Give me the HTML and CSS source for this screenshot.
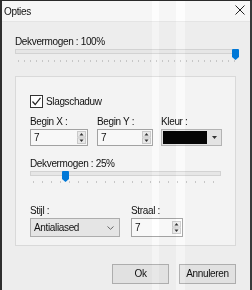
FILE: index.html
```html
<!DOCTYPE html>
<html lang="nl">
<head>
<meta charset="utf-8">
<title>Opties</title>
<link rel="stylesheet" href="styles.css">
</head>
<body>
<div class="window">
  <div class="titlebar">
    <span class="title">Opties</span>
    <svg class="close" width="10" height="10" viewBox="0 0 10 10"><path d="M0.5 0.5L9.5 9.5M9.5 0.5L0.5 9.5" stroke="#222" stroke-width="1" fill="none"/></svg>
  </div>
  <div class="content">
    <div class="label">Dekvermogen : 100%</div>
    <div class="slider">
      <div class="track"></div>
      <svg class="thumb thumb-full" width="7" height="11" viewBox="0 0 7 11"><path d="M0 1Q0 0 1 0H6Q7 0 7 1V8L3.5 11L0 8Z" fill="#0078d7"/></svg>
      <div class="ticks"></div>
    </div>

    <div class="panel">
      <div class="check">
        <span class="box"><svg width="11" height="11" viewBox="0 0 11 11"><path d="M1.5 5.5L4.2 8.5L9.5 1.8" fill="none" stroke="#222" stroke-width="1.2"/></svg></span>
        <span>Slagschaduw</span>
      </div>

      <div class="fields">
        <div class="field">
          <div class="flabel">Begin X :</div>
          <div class="spin"><span class="val">7</span>
            <svg class="arrows" width="9" height="13" viewBox="0 0 9 13"><rect x="0.5" y="0.5" width="8" height="5.5" fill="#e8e8e8" stroke="#c9c9c9"/><rect x="0.5" y="7" width="8" height="5.5" fill="#e8e8e8" stroke="#c9c9c9"/><path d="M2.5 4.5H6.5L4.5 2Z" fill="#333"/><path d="M2.5 8.5H6.5L4.5 11Z" fill="#333"/></svg>
          </div>
        </div>
        <div class="field">
          <div class="flabel">Begin Y :</div>
          <div class="spin"><span class="val">7</span>
            <svg class="arrows" width="9" height="13" viewBox="0 0 9 13"><rect x="0.5" y="0.5" width="8" height="5.5" fill="#e8e8e8" stroke="#c9c9c9"/><rect x="0.5" y="7" width="8" height="5.5" fill="#e8e8e8" stroke="#c9c9c9"/><path d="M2.5 4.5H6.5L4.5 2Z" fill="#333"/><path d="M2.5 8.5H6.5L4.5 11Z" fill="#333"/></svg>
          </div>
        </div>
        <div class="field">
          <div class="flabel">Kleur :</div>
          <div class="color"><span class="swatch"></span>
            <svg class="caret" width="5" height="3" viewBox="0 0 5 3"><path d="M0 0H5L2.5 3Z" fill="#333"/></svg>
          </div>
        </div>
      </div>

      <div class="label label2">Dekvermogen : 25%</div>
      <div class="slider">
        <div class="track"></div>
        <svg class="thumb thumb-quarter" width="7" height="11" viewBox="0 0 7 11"><path d="M0 1Q0 0 1 0H6Q7 0 7 1V8L3.5 11L0 8Z" fill="#0078d7"/></svg>
        <div class="ticks ticks2"></div>
      </div>

      <div class="row2">
        <div class="field">
          <div class="flabel">Stijl :</div>
          <div class="select"><span>Antialiased</span>
            <svg width="7" height="4" viewBox="0 0 7 4"><path d="M0.5 0.5L3.5 3.3L6.5 0.5" fill="none" stroke="#666" stroke-width="1"/></svg>
          </div>
        </div>
        <div class="field">
          <div class="flabel">Straal :</div>
          <div class="spin spin-tall"><span class="val">7</span>
            <svg class="arrows" width="9" height="13" viewBox="0 0 9 13"><rect x="0.5" y="0.5" width="8" height="5.5" fill="#e8e8e8" stroke="#c9c9c9"/><rect x="0.5" y="7" width="8" height="5.5" fill="#e8e8e8" stroke="#c9c9c9"/><path d="M2.5 4.5H6.5L4.5 2Z" fill="#333"/><path d="M2.5 8.5H6.5L4.5 11Z" fill="#333"/></svg>
          </div>
        </div>
      </div>
    </div>

    <div class="buttons">
      <button class="btn">Ok</button>
      <button class="btn">Annuleren</button>
    </div>
  </div>
  <div class="stripe stripe-a"></div>
  <div class="stripe stripe-b"></div>
</div>
</body>
</html>
```
FILE: styles.css
```css
* { box-sizing: border-box; }
html, body { margin: 0; padding: 0; }
body {
  width: 252px;
  height: 290px;
  overflow: hidden;
  background: #2e2e2e;
  font-family: "Liberation Sans", Arial, sans-serif;
  font-size: 10px;
  line-height: 12px;
  letter-spacing: -0.35px;
  color: #111;
}
.window {
  position: relative;
  height: 290px;
  border-top: 1px solid #2a2a2a;
  border-left: 2px solid #2e2e2e;
  border-right: 2px solid #3a3a3a;
  background: #ededed;
}
.titlebar {
  height: 21px;
  background: #f6f6f6;
  display: flex;
  align-items: center;
  justify-content: space-between;
  padding: 0 5px 0 2px;
  border-bottom: 1px solid #e4e4e4;
}
.title { padding-top: 1px; }
.close { display: block; margin-top: -2px; }
.content { padding: 14px 14px 0 13px; }
.label { height: 12px; }
.slider { position: relative; margin-top: -2px; height: 16px; }
.track {
  margin-top: 3px;
  height: 5px;
  background: #e6e6e6;
  border: 1px solid #d2d2d2;
}
.thumb { position: absolute; top: 0; display: block; }
.thumb-full { left: 217px; }
.thumb-quarter { left: 32px; }
.ticks {
  margin-top: 6px;
  height: 2px;
  background: repeating-linear-gradient(to right, transparent 0 3px, #c6c6c6 3px 4px, transparent 4px 6px);
}
.ticks2 {
  margin-top: 5px;
  background: repeating-linear-gradient(to right, transparent 0 3px, #c6c6c6 3px 4px, transparent 4px 9px);
}
.panel {
  margin-top: 11px;
  background: #f3f3f3;
  border: 1px solid #d9d9d9;
  padding: 18px 14px 8px 14px;
}
.check { display: flex; align-items: center; gap: 3px; height: 13px; }
.box {
  width: 13px;
  height: 13px;
  border: 1px solid #333;
  background: #fff;
  display: flex;
  align-items: center;
  justify-content: center;
}
.box svg { display: block; }
.fields {
  margin-top: 8px;
  display: grid;
  grid-template-columns: 58px 56px 60px;
  column-gap: 9px;
}
.fields .field:nth-child(3) { margin-left: -1px; }
.flabel { height: 12px; margin-bottom: 1px; }
.spin {
  display: flex;
  align-items: center;
  height: 17px;
  border: 1px solid #a2a2a2;
  background: #f8f8f8;
  padding-right: 1px;
}
.val { flex: 1; padding-left: 3px; }
.arrows { display: block; }
.spin-tall { height: 19px; }
.color {
  display: flex;
  align-items: center;
  height: 17px;
  border: 1px solid #b3b3b3;
  background: #e3e3e3;
  padding: 1px;
}
.swatch { width: 44px; height: 13px; background: #050505; }
.caret { display: block; margin-left: 5px; }
.label2 { margin-top: 12px; }
.row2 {
  margin-top: 18px;
  display: grid;
  grid-template-columns: 90px 52px;
  column-gap: 11px;
}
.select {
  display: flex;
  align-items: center;
  justify-content: space-between;
  height: 19px;
  border: 1px solid #adadad;
  background: #e5e5e5;
  padding: 0 5px 0 3px;
}
.select svg { display: block; }
.buttons {
  margin-top: 18px;
  display: flex;
  justify-content: flex-end;
  gap: 10px;
}
.btn {
  width: 57px;
  height: 20px;
  margin: 0;
  padding: 0;
  background: #e1e1e1;
  border: 1px solid #adadad;
  font: inherit;
  letter-spacing: inherit;
  color: #111;
}
.stripe {
  position: absolute;
  top: 0;
  bottom: 0;
  background: #070707;
  mix-blend-mode: color-dodge;
  pointer-events: none;
}
.stripe-a { left: 150px; width: 7px; }
.stripe-b { left: 174px; width: 9px; }
```
